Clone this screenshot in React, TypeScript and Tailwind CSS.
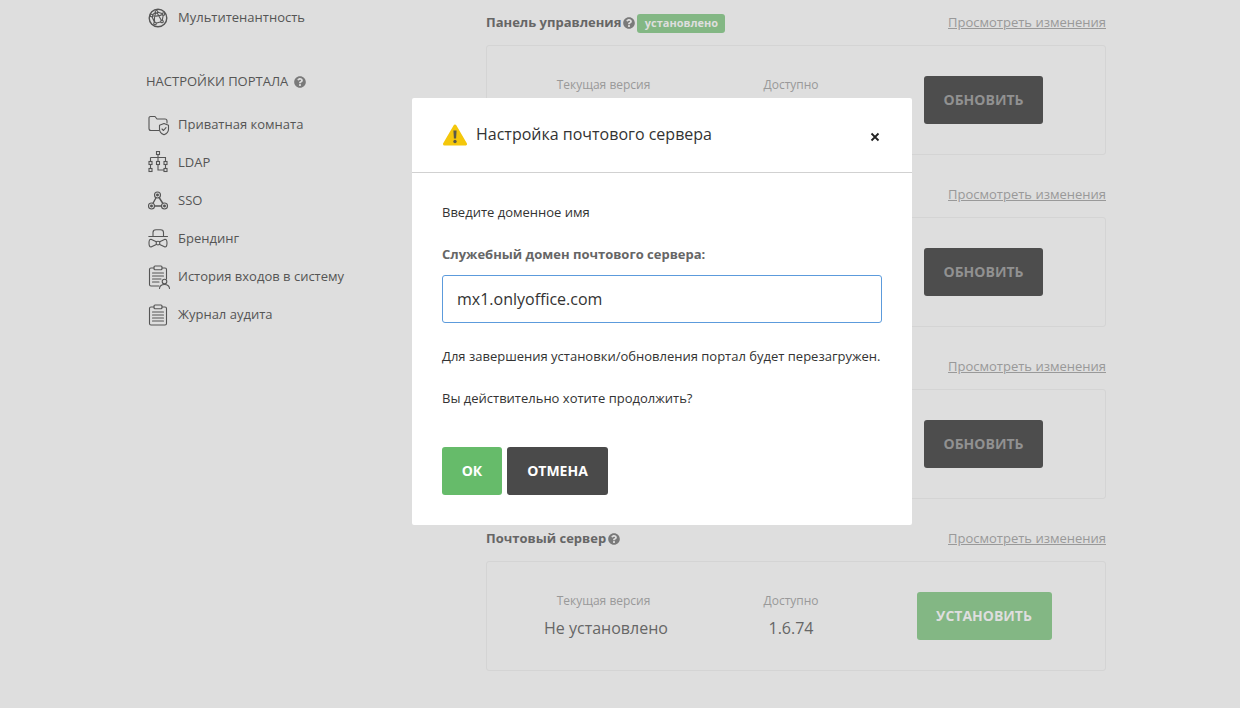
import { FaQuestionCircle } from 'react-icons/fa';

const stroke = { fill: 'none', stroke: '#555555', strokeWidth: 1.1, strokeLinecap: 'round', strokeLinejoin: 'round' } as const;

const GlobeIcon = () => (
  <svg width="20" height="20" viewBox="0 0 20 20" {...stroke}>
    <circle cx="10" cy="10" r="8.800" strokeWidth="1.400" />
    <path d="M3.500 7.500 L8.500 3.800 L15.500 6 L14 13.500 L7 15.500 Z M8.500 3.800 L14 13.500 M3.500 7.500 C7 8.500 12 8 15.500 6 M7 15.500 C6 12 6.500 7 8.500 3.800" />
    <circle cx="8.500" cy="3.800" r="1.300" fill="#dedede" />
    <circle cx="15.500" cy="6" r="1.300" fill="#dedede" />
    <circle cx="14" cy="13.500" r="1.300" fill="#dedede" />
    <circle cx="7" cy="15.500" r="1.300" fill="#dedede" />
    <circle cx="3.500" cy="7.500" r="1.300" fill="#dedede" />
  </svg>
);

const FolderShieldIcon = () => (
  <svg width="22" height="22" viewBox="0 0 22 22" {...stroke}>
    <path d="M11 16.500 H3 a2 2 0 0 1 -2 -2 V4 a1.500 1.500 0 0 1 1.500 -1.500 H7 l2 2.500 h8 a2 2 0 0 1 2 2 V9" />
    <path d="M16 9.500 l4.500 1.700 v4 c0 2.600 -2 4.500 -4.500 5.600 c-2.500 -1.100 -4.500 -3 -4.500 -5.600 v-4 z" />
    <path d="M14 15 l1.500 1.500 l2.500 -2.800" />
  </svg>
);

const TreeIcon = () => (
  <svg width="20" height="24" viewBox="0 0 20 24" {...stroke} strokeLinecap="butt" strokeLinejoin="miter">
    <rect x="8.500" y="0.500" width="3" height="3" />
    <path d="M10 3.500 V10.500 M2.500 6.500 H17.500 V10.500 M2.500 6.500 V10.500 M2.500 13.500 V17.500 M17.500 13.500 V17.500 M10 13.500 V19 H16" />
    <rect x="1" y="10.500" width="3" height="3" />
    <rect x="8.500" y="10.500" width="3" height="3" />
    <rect x="16" y="10.500" width="3" height="3" />
    <rect x="1" y="17.500" width="3" height="3" />
    <rect x="16" y="17.500" width="3" height="3" />
  </svg>
);

const NodesIcon = () => (
  <svg width="20" height="20" viewBox="0 0 20 20" {...stroke}>
    <path d="M9.500 4 L3.500 15 H16.500 Z" strokeWidth="1.400" />
    <circle cx="9.500" cy="4" r="3" fill="#dedede" />
    <circle cx="3.500" cy="15" r="3" fill="#dedede" />
    <circle cx="16.500" cy="15" r="3" fill="#dedede" />
    <circle cx="9.500" cy="4" r="0.900" fill="#555555" />
    <circle cx="3.500" cy="15" r="0.900" fill="#555555" />
    <circle cx="16.500" cy="15" r="0.900" fill="#555555" />
  </svg>
);

const HatIcon = () => (
  <svg width="20" height="20" viewBox="0 0 20 20" {...stroke}>
    <path d="M5 7 V3.500 C5 1.300 6.300 0.800 8 0.800 H12.500 C14.200 0.800 15.500 1.300 15.500 3.500 V7" />
    <path d="M0.800 7.500 H19.500" />
    <path d="M8.300 12.800 L3 10.300 C1.400 10.300 1 12 1 14 C1 16 1.400 18 3 18 L8.300 15.400 M11.700 12.800 L17 10.300 C18.600 10.300 19 12 19 14 C19 16 18.600 18 17 18 L11.700 15.400" />
    <circle cx="10" cy="14.100" r="1.900" />
  </svg>
);

const ClipboardUserIcon = () => (
  <svg width="22" height="24" viewBox="0 0 22 24" {...stroke}>
    <path d="M11 21 H3 a1.500 1.500 0 0 1 -1.500 -1.500 V4.500 A1.500 1.500 0 0 1 3 3 H6 M14 3 h3 a1.500 1.500 0 0 1 1.500 1.500 V14" />
    <rect x="6" y="1" width="8" height="3.800" rx="1" />
    <path d="M4.500 8 H15.500 M4.500 11 H15.500 M4.500 14 H13 M4.500 17 H11" />
    <circle cx="16.500" cy="16.500" r="2.300" />
    <path d="M11.500 23.500 C11.800 20.500 14 19.500 16.500 19.500 C19 19.500 21.200 20.500 21.500 23.500" />
  </svg>
);

const ClipboardIcon = () => (
  <svg width="20" height="22" viewBox="0 0 20 22" {...stroke}>
    <path d="M6 3 H3 a1.500 1.500 0 0 0 -1.500 1.500 V19.500 A1.500 1.500 0 0 0 3 21 H17 a1.500 1.500 0 0 0 1.500 -1.500 V4.500 A1.500 1.500 0 0 0 17 3 H14" />
    <rect x="6" y="1" width="8" height="3.800" rx="1" />
    <path d="M4.500 8 H15.500 M4.500 11 H15.500 M4.500 14 H15.500 M4.500 17 H15.500" />
  </svg>
);

const WarningIcon = () => (
  <svg width="24" height="23" viewBox="0 0 24 23">
    <path d="M12 2 L22.500 20 H1.500 Z" fill="#f4c70b" stroke="#f4c70b" strokeWidth="3" strokeLinejoin="round" />
    <path d="M10.400 6.500 h3.200 l-0.500 8 h-2.200 z" fill="#5a5a4a" />
    <circle cx="12" cy="17.500" r="1.700" fill="#5a5a4a" />
  </svg>
);

const Help = () => <FaQuestionCircle className="text-[#7a7a7a]" size={12} />;

const topItems = [{ label: 'Мультитенантность', icon: <GlobeIcon /> }];
const portalItems = [
  { label: 'Приватная комната', icon: <FolderShieldIcon /> },
  { label: 'LDAP', icon: <TreeIcon /> },
  { label: 'SSO', icon: <NodesIcon /> },
  { label: 'Брендинг', icon: <HatIcon /> },
  { label: 'История входов в систему', icon: <ClipboardUserIcon /> },
  { label: 'Журнал аудита', icon: <ClipboardIcon /> },
];

// rows 2 and 3 sit behind the dialog, only their link and button show
const sections = [
  { id: 'panel', title: 'Панель управления', installed: true, labels: true, action: 'ОБНОВИТЬ' },
  { id: 'docs', action: 'ОБНОВИТЬ' },
  { id: 'community', action: 'ОБНОВИТЬ' },
  { id: 'mail', title: 'Почтовый сервер', labels: true, current: 'Не установлено', available: '1.6.74', action: 'УСТАНОВИТЬ', install: true },
];

const MenuItem = ({ label, icon }: { label: string; icon: React.ReactNode }) => (
  <div className="flex h-[38px] items-center text-[13px] text-[#555]">
    <div className="flex w-[32px] justify-start pl-[2px]">{icon}</div>
    <span>{label}</span>
  </div>
);

const App = () => {
  return (
    <div className="relative h-[708px] overflow-hidden bg-[#dedede] font-['Open_Sans',sans-serif]">
      <div className="flex pl-[146px]">
        <aside className="mt-[-1px] w-[340px] shrink-0">
          {topItems.map((item) => (
            <MenuItem key={item.label} {...item} />
          ))}
          <div className="mt-[35px] mb-[14px] flex h-[20px] items-center gap-[6px] text-[13px] text-[#555]">
            <span>НАСТРОЙКИ ПОРТАЛА</span>
            <Help />
          </div>
          {portalItems.map((item) => (
            <MenuItem key={item.label} {...item} />
          ))}
        </aside>

        <main className="flex w-[620px] shrink-0 flex-col gap-[28px] pt-[11px]">
          {sections.map((s) => (
            <section key={s.id}>
              <div className="mb-[10px] flex h-[24px] items-center justify-between">
                <div className="flex items-center gap-[2px]">
                  {s.title && (
                    <>
                      <span className="text-[13px] font-bold text-[#666]">{s.title}</span>
                      <Help />
                    </>
                  )}
                  {s.installed && (
                    <span className="flex h-[19px] w-[88px] items-center justify-center rounded-[3px] bg-[#83b784] text-[11px] font-bold text-[#dedede]">
                      установлено
                    </span>
                  )}
                </div>
                <a className="ml-auto text-[13px] text-[#999] underline">Просмотреть изменения</a>
              </div>
              <div className="grid h-[110px] grid-cols-[233px_142px_1fr] items-center rounded-[3px] border border-[#d4d4d4]">
                <div className="pb-[3px] text-center">
                  {s.labels && (
                    <>
                      <div className="text-[12px] leading-[20px] text-[#999]">Текущая версия</div>
                      <div className="mt-[6px] h-[22px] pl-[5px] text-[16px] leading-[22px] text-[#666]">{s.current}</div>
                    </>
                  )}
                </div>
                <div className="pb-[3px] text-center">
                  {s.labels && (
                    <>
                      <div className="text-[12px] leading-[20px] text-[#999]">Доступно</div>
                      <div className="mt-[6px] h-[22px] text-[16px] leading-[22px] text-[#666]">{s.available}</div>
                    </>
                  )}
                </div>
                <div className="flex justify-center">
                  <button
                    className={
                      s.install
                        ? 'ml-[1px] h-[48px] w-[135px] rounded-[3px] bg-[#83b784] pb-[2px] text-[14px] font-bold text-[#dedede]'
                        : 'h-[48px] w-[119px] rounded-[3px] bg-[#4d4d4d] pb-[2px] text-[14px] font-bold text-[#919191]'
                    }
                  >
                    {s.action}
                  </button>
                </div>
              </div>
            </section>
          ))}
        </main>
      </div>

      <div className="absolute top-[98px] left-[412px] h-[427px] w-[500px] rounded-[2px] bg-white">
        <div className="flex h-[75px] items-center border-b border-[#d1d1d1] pr-[32px] pl-[31px]">
          <WarningIcon />
          <span className="mb-[2px] ml-[9px] text-[16px] text-[#333]">Настройка почтового сервера</span>
          <svg className="mt-[3px] ml-auto" width="10" height="10" viewBox="0 0 10 10">
            <path d="M1.500 1.500 L8.500 8.500 M8.500 1.500 L1.500 8.500" stroke="#222" strokeWidth="1.800" />
          </svg>
        </div>
        <div className="px-[30px]">
          <p className="mt-[29px] text-[13px] leading-[20px] text-[#333]">Введите доменное имя</p>
          <p className="mt-[22px] text-[13px] leading-[20px] font-bold text-[#666]">Служебный домен почтового сервера:</p>
          <input
            readOnly
            value="mx1.onlyoffice.com"
            className="mt-[11px] h-[48px] w-[440px] rounded-[3px] border border-[#5c9bdc] px-[14px] text-[16px] text-[#333] outline-none"
          />
          <p className="mt-[23px] text-[13px] leading-[20px] text-[#333]">
            Для завершения установки/обновления портал будет перезагружен.
          </p>
          <p className="mt-[22px] text-[13px] leading-[20px] text-[#333]">Вы действительно хотите продолжить?</p>
          <div className="mt-[39px] flex gap-[5px]">
            <button className="h-[48px] w-[60px] rounded-[3px] bg-[#66bb6a] pb-[2px] text-[14px] font-bold text-white">ОК</button>
            <button className="h-[48px] w-[101px] rounded-[3px] bg-[#4a4a4a] pb-[2px] text-[14px] font-bold text-white">ОТМЕНА</button>
          </div>
        </div>
      </div>
    </div>
  );
};

export default App;
